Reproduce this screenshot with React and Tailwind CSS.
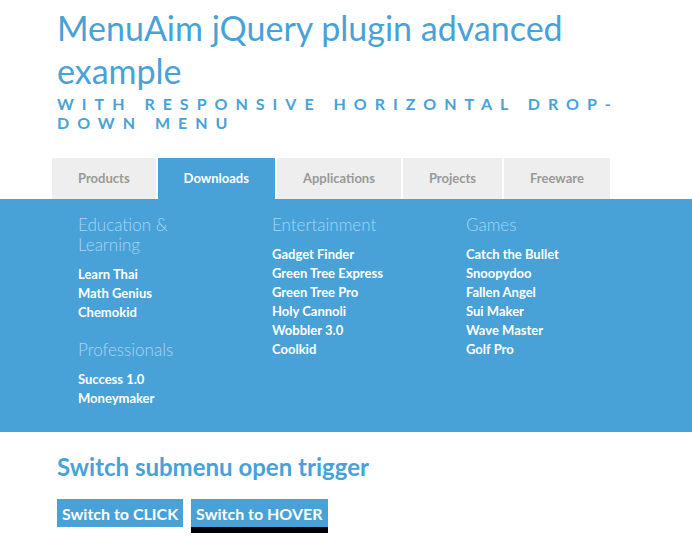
import React from 'react';

const tabs = ['Products', 'Downloads', 'Applications', 'Projects', 'Freeware'];

const columns = [
  [
    { title: 'Education & Learning', items: ['Learn Thai', 'Math Genius', 'Chemokid'] },
    { title: 'Professionals', items: ['Success 1.0', 'Moneymaker'] },
  ],
  [
    {
      title: 'Entertainment',
      items: ['Gadget Finder', 'Green Tree Express', 'Green Tree Pro', 'Holy Cannoli', 'Wobbler 3.0', 'Coolkid'],
    },
  ],
  [
    {
      title: 'Games',
      items: ['Catch the Bullet', 'Snoopydoo', 'Fallen Angel', 'Sui Maker', 'Wave Master', 'Golf Pro'],
    },
  ],
];

const App = () => {
  return (
    <div className="min-h-screen bg-white font-['Lato','Liberation_Sans',sans-serif] text-[#48a2d8]">
      {/* Header */}
      <div className="px-[57px] pt-[6px]">
        <h1 className="text-[34px] leading-[43px] font-normal">MenuAim jQuery plugin advanced example</h1>
        <h2 className="mt-[2px] text-[16px] leading-[19px] font-bold uppercase tracking-[0.5em]">
          with responsive horizontal drop-down menu
        </h2>
      </div>

      {/* Tabs */}
      <div className="mt-[26px] pl-[52px] flex gap-[2px]">
        {tabs.map((tab) => (
          <div
            key={tab}
            className={`h-[41px] px-[26px] flex items-center text-[13px] font-bold ${
              tab === 'Downloads' ? 'bg-[#48a2d8] text-white' : 'bg-[#eeeeee] text-[#999999]'
            }`}
          >
            {tab}
          </div>
        ))}
      </div>

      {/* Submenu */}
      <div className="h-[233px] bg-[#48a2d8] pl-[78px] pt-[16px] flex">
        {columns.map((groups, i) => (
          <div key={i} className="w-[194px] pr-[44px] flex flex-col gap-[18px]">
            {groups.map((g) => (
              <div key={g.title}>
                <h3 className="text-[17px] leading-[20px] font-light text-[#a9d6f5] mb-[10px]">{g.title}</h3>
                <ul>
                  {g.items.map((item) => (
                    <li key={item} className="text-[13px] leading-[19px] font-bold text-white">
                      {item}
                    </li>
                  ))}
                </ul>
              </div>
            ))}
          </div>
        ))}
      </div>

      {/* Trigger switch */}
      <div className="px-[57px] pt-[20px]">
        <h2 className="text-[24px] leading-[30px] font-bold">Switch submenu open trigger</h2>
        <div className="mt-[17px] flex gap-[8px] items-start">
          <button className="h-[28px] px-[5px] pt-[1px] bg-[#48a2d8] text-white text-[16px] font-bold">Switch to CLICK</button>
          <button className="h-[34px] px-[5px] pt-[1px] bg-[#48a2d8] text-white text-[16px] font-bold border-b-[6px] border-black">
            Switch to HOVER
          </button>
        </div>
      </div>
    </div>
  );
};

export default App;
